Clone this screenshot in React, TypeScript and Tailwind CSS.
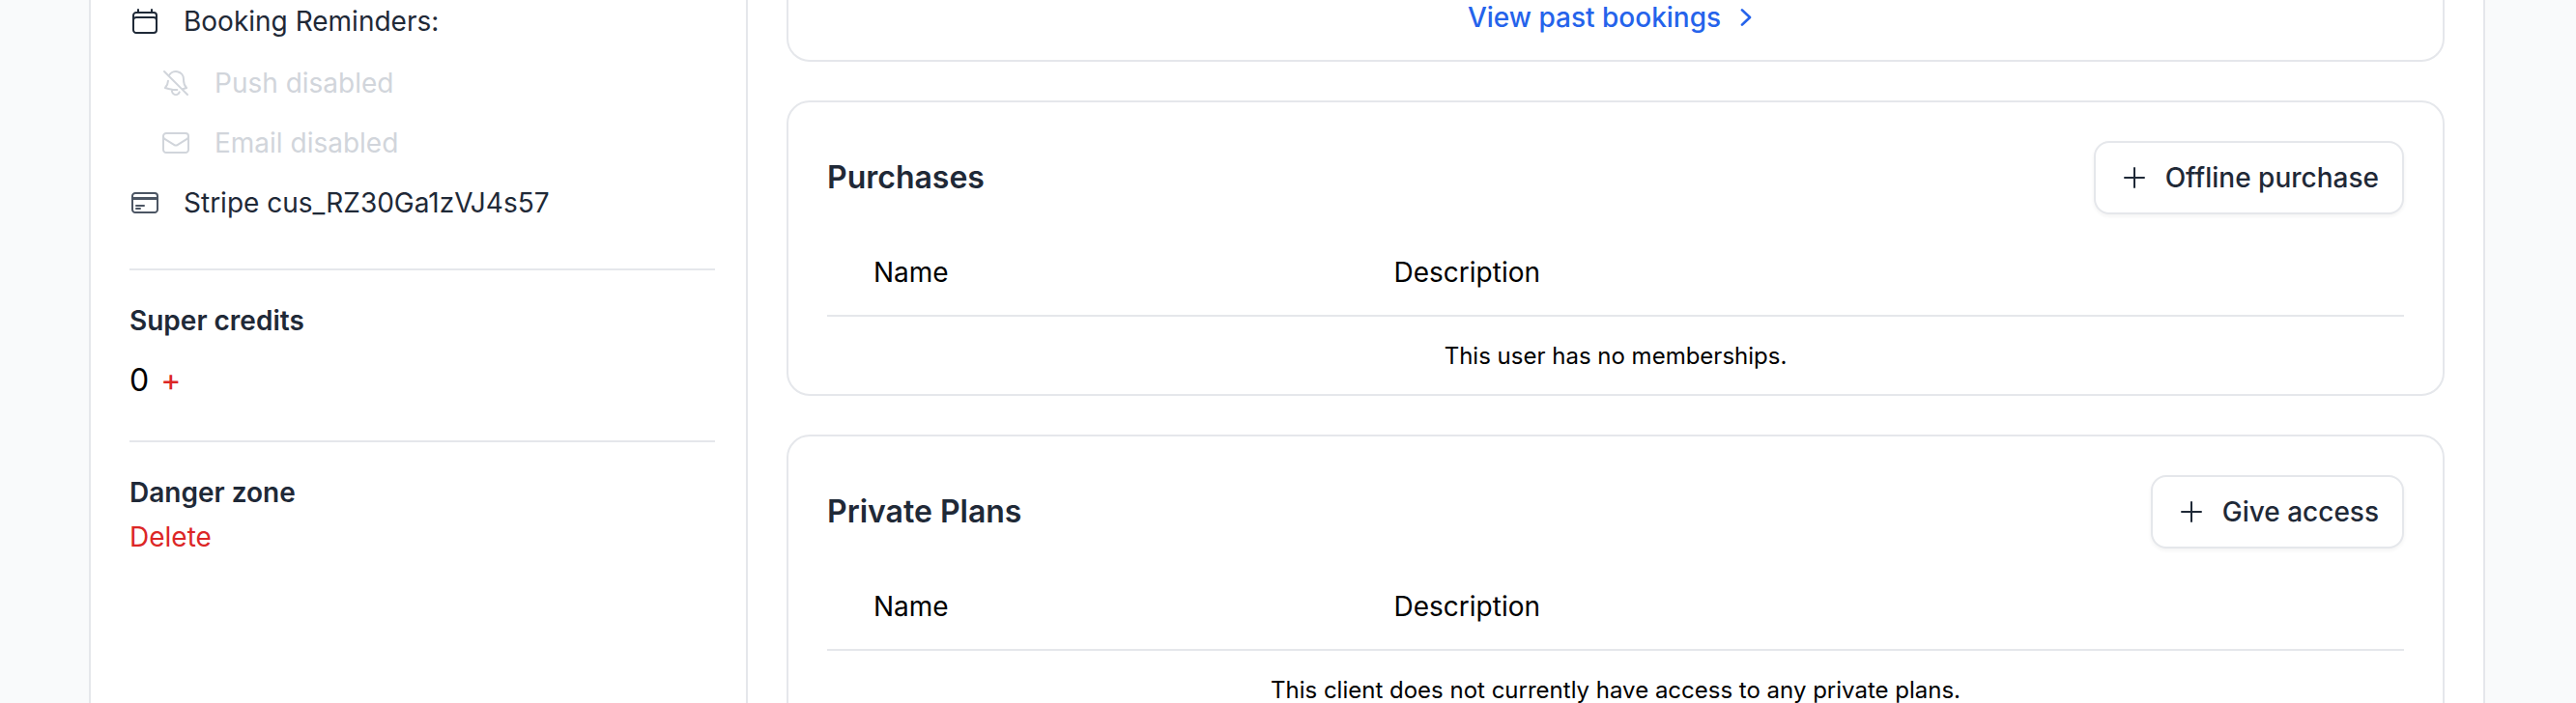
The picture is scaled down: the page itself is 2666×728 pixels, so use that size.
import type { ComponentType } from "react";
import {
  HiOutlineBellSlash,
  HiOutlineCalendar,
  HiOutlineCreditCard,
  HiOutlineEnvelope,
  HiOutlinePlus,
} from "react-icons/hi2";

type IconType = ComponentType<{ className?: string }>;

function InfoRow({ icon: Icon, text, iconClass = "" }: { icon: IconType; text: string; iconClass?: string }) {
  return (
    <div className="flex items-center gap-6">
      <Icon className={`size-8 shrink-0 ${iconClass}`} />
      <span>{text}</span>
    </div>
  );
}

function TableCard({ title, action, empty }: { title: string; action: string; empty: string }) {
  return (
    <section className="rounded-3xl border-2 border-[#e5e7eb] bg-white px-10 pt-10">
      <div className="flex items-center justify-between">
        <h2 className="text-[32px] leading-10 font-semibold text-[#1f2937]">{title}</h2>
        <button
          type="button"
          className="flex items-center gap-4 rounded-2xl border-2 border-[#e5e7eb] bg-white px-6 py-4 font-medium text-[#1f2937] shadow-[0_2px_4px_rgba(0,0,0,0.05)]"
        >
          <HiOutlinePlus className="size-8" />
          {action}
        </button>
      </div>
      <table className="mt-4 w-full table-fixed text-left">
        <thead>
          <tr className="border-b-2 border-[#e5e7eb]">
            <th scope="col" className="w-[33%] px-12 py-6 font-normal">Name</th>
            <th scope="col" className="px-12 py-6 font-normal">Description</th>
          </tr>
        </thead>
        <tbody>
          <tr>
            <td colSpan={2} className="pt-[21px] pb-[19px] text-center text-2xl leading-10">{empty}</td>
          </tr>
        </tbody>
      </table>
    </section>
  );
}

export default function App() {
  return (
    <div className="h-screen overflow-hidden bg-[#f9fafb] pr-[94px] pl-[92px] font-['Inter','Liberation_Sans',sans-serif] text-[28px] leading-10 text-black">
      <div className="flex min-h-screen border-x-2 border-[#e5e7eb] bg-white">
        <aside className="w-[680px] shrink-0 border-r-2 border-[#e5e7eb] pt-[2px] pr-8 pl-10">
          <ul className="flex flex-col gap-[22px] pb-12 text-[#1f2937]">
            <li>
              <InfoRow icon={HiOutlineCalendar} text="Booking Reminders:" />
              <ul className="mt-6 flex flex-col gap-[22px] pl-8 text-[#d1d5db]">
                <li><InfoRow icon={HiOutlineBellSlash} text="Push disabled" /></li>
                <li><InfoRow icon={HiOutlineEnvelope} text="Email disabled" /></li>
              </ul>
            </li>
            <li><InfoRow icon={HiOutlineCreditCard} text="Stripe cus_RZ30Ga1zVJ4s57" iconClass="text-[#4b5563]" /></li>
          </ul>
          <section className="border-t-2 border-[#e5e7eb] pt-8 pb-[42px]">
            <h3 className="font-semibold text-[#1f2937]">Super credits</h3>
            <div className="mt-[22px] flex items-baseline gap-3 text-[32px]">
              <span>0</span>
              <button type="button" aria-label="Add super credits" className="text-[#dc2626]">+</button>
            </div>
          </section>
          <section className="border-t-2 border-[#e5e7eb] pt-8">
            <h3 className="font-semibold text-[#1f2937]">Danger zone</h3>
            <button type="button" className="mt-[6px] text-[#dc2626]">Delete</button>
          </section>
        </aside>
        <main className="flex min-w-0 flex-1 flex-col gap-10 px-10">
          <section className="flex h-16 items-start justify-center rounded-b-3xl border-2 border-t-0 border-[#e5e7eb]">
            <a href="#past" className="flex items-center gap-2 leading-9 font-medium text-[#2563eb]">
              View past bookings
              <svg viewBox="0 0 20 20" fill="currentColor" className="size-9" aria-hidden="true">
                <path d="M7.21 14.77a.75.75 0 0 1 .02-1.06L11.168 10 7.23 6.29a.75.75 0 1 1 1.04-1.08l4.5 4.25a.75.75 0 0 1 0 1.08l-4.5 4.25a.75.75 0 0 1-1.06-.02Z" />
              </svg>
            </a>
          </section>
          <TableCard title="Purchases" action="Offline purchase" empty="This user has no memberships." />
          <TableCard
            title="Private Plans"
            action="Give access"
            empty="This client does not currently have access to any private plans."
          />
        </main>
      </div>
    </div>
  );
}
